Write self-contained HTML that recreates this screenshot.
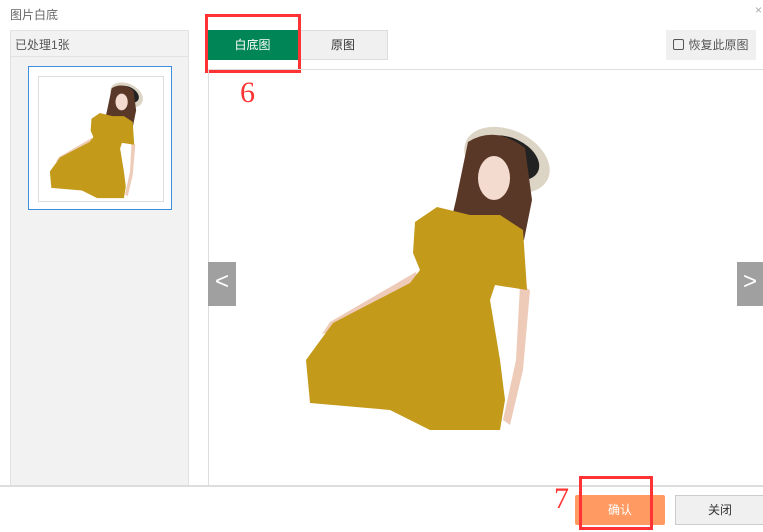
<!DOCTYPE html>
<html><head><meta charset="utf-8"><style>
body{margin:0;width:763px;height:532px;background:#fff;position:relative;overflow:hidden;font-family:"Liberation Sans","Noto Sans CJK SC",sans-serif;font-size:12px;color:#333}
.a{position:absolute}
</style></head><body>
<div class="a" style="left:10px;top:6px;color:#666">图片白底</div>
<div class="a" style="left:755px;top:3px;color:#aaa;font-size:12px">×</div>
<div class="a" style="left:10px;top:30px;width:179px;height:456px;background:#f2f2f2;border:1px solid #e2e2e2;box-sizing:border-box"></div>
<div class="a" style="left:11px;top:56px;width:178px;height:1px;background:#e2e2e2"></div>
<div class="a" style="left:15px;top:36px;color:#555">已处理1张</div>
<div class="a" style="left:28px;top:66px;width:144px;height:144px;background:#fff;border:1px solid #3b8ed8;box-sizing:border-box"></div>
<div class="a" style="left:38px;top:76px;width:126px;height:126px;border:1px solid #ddd;box-sizing:border-box"></div>
<svg width="0" height="0" style="position:absolute"><defs>
<g id="w">
<path d="M416 272 L330 322 L322 334 L336 330 L420 292Z" fill="#eecbb8"/>
<path d="M520 285 L516 360 L503 420 L510 425 L523 370 L530 290Z" fill="#eecbb8"/>
<ellipse cx="507" cy="160" rx="45" ry="30" transform="rotate(25 507 160)" fill="#dcd4c4"/>
<ellipse cx="509" cy="158" rx="32" ry="20" transform="rotate(25 509 158)" fill="#222"/>
<path d="M468 142 Q495 125 525 148 L532 200 L524 240 L500 228 L470 226 L446 242 L456 200Z" fill="#5a3828"/>
<ellipse cx="494" cy="178" rx="16" ry="22" fill="#f3dbcf"/>
<path d="M437 207 L470 215 L500 215 L523 230 L527 290 L495 285 L490 300 L500 360 L505 400 L500 430 L430 430 L390 410 L310 403 L306 360 L333 323 L410 283 L420 270 L413 253 L415 222Z" fill="#c49a1a"/>
</g></defs></svg>
<svg class="a" style="left:38px;top:76px" width="126" height="126" viewBox="290 110 300 330"><use href="#w"/></svg>
<div class="a" style="left:207px;top:30px;width:91px;height:30px;background:#008556;color:#fff;text-align:center;line-height:30px">白底图</div>
<div class="a" style="left:298px;top:30px;width:90px;height:30px;background:#f0f0f0;border:1px solid #ddd;box-sizing:border-box;text-align:center;line-height:28px">原图</div>
<div class="a" style="left:205px;top:14px;width:90px;height:53px;border:3px solid #f33"></div>
<div class="a" style="left:240px;top:76px;color:#f33;font:30px 'Liberation Serif',serif">6</div>
<div class="a" style="left:666px;top:30px;width:90px;height:30px;background:#f0f0f0;line-height:30px;text-align:center;color:#555"><span style="display:inline-block;width:9px;height:9px;border:1px solid #555;border-radius:2px;vertical-align:-1px;margin-right:4px"></span>恢复此原图</div>
<div class="a" style="left:208px;top:69px;width:555px;height:1px;background:#ddd"></div>
<div class="a" style="left:208px;top:69px;width:1px;height:417px;background:#ddd"></div>
<svg class="a" style="left:0;top:0" width="763" height="532" viewBox="0 0 763 532"><use href="#w"/></svg>
<div class="a" style="left:208px;top:262px;width:28px;height:44px;background:#a0a0a0;color:#fff;font-size:24px;text-align:center;line-height:40px">&lt;</div>
<div class="a" style="left:737px;top:262px;width:26px;height:44px;background:#a0a0a0;color:#fff;font-size:24px;text-align:center;line-height:40px">&gt;</div>
<div class="a" style="left:0;top:485px;width:763px;height:2px;background:#ddd"></div>
<div class="a" style="left:575px;top:495px;width:90px;height:30px;background:#ff9b62;border-radius:2px;color:#fff;text-align:center;line-height:30px">确认</div>
<div class="a" style="left:675px;top:495px;width:90px;height:30px;background:#f0f0f0;border:1px solid #ccc;box-sizing:border-box;text-align:center;line-height:28px">关闭</div>
<div class="a" style="left:579px;top:476px;width:68px;height:48px;border:3px solid #f33"></div>
<div class="a" style="left:554px;top:482px;color:#f33;font:30px 'Liberation Serif',serif">7</div>
</body></html>
